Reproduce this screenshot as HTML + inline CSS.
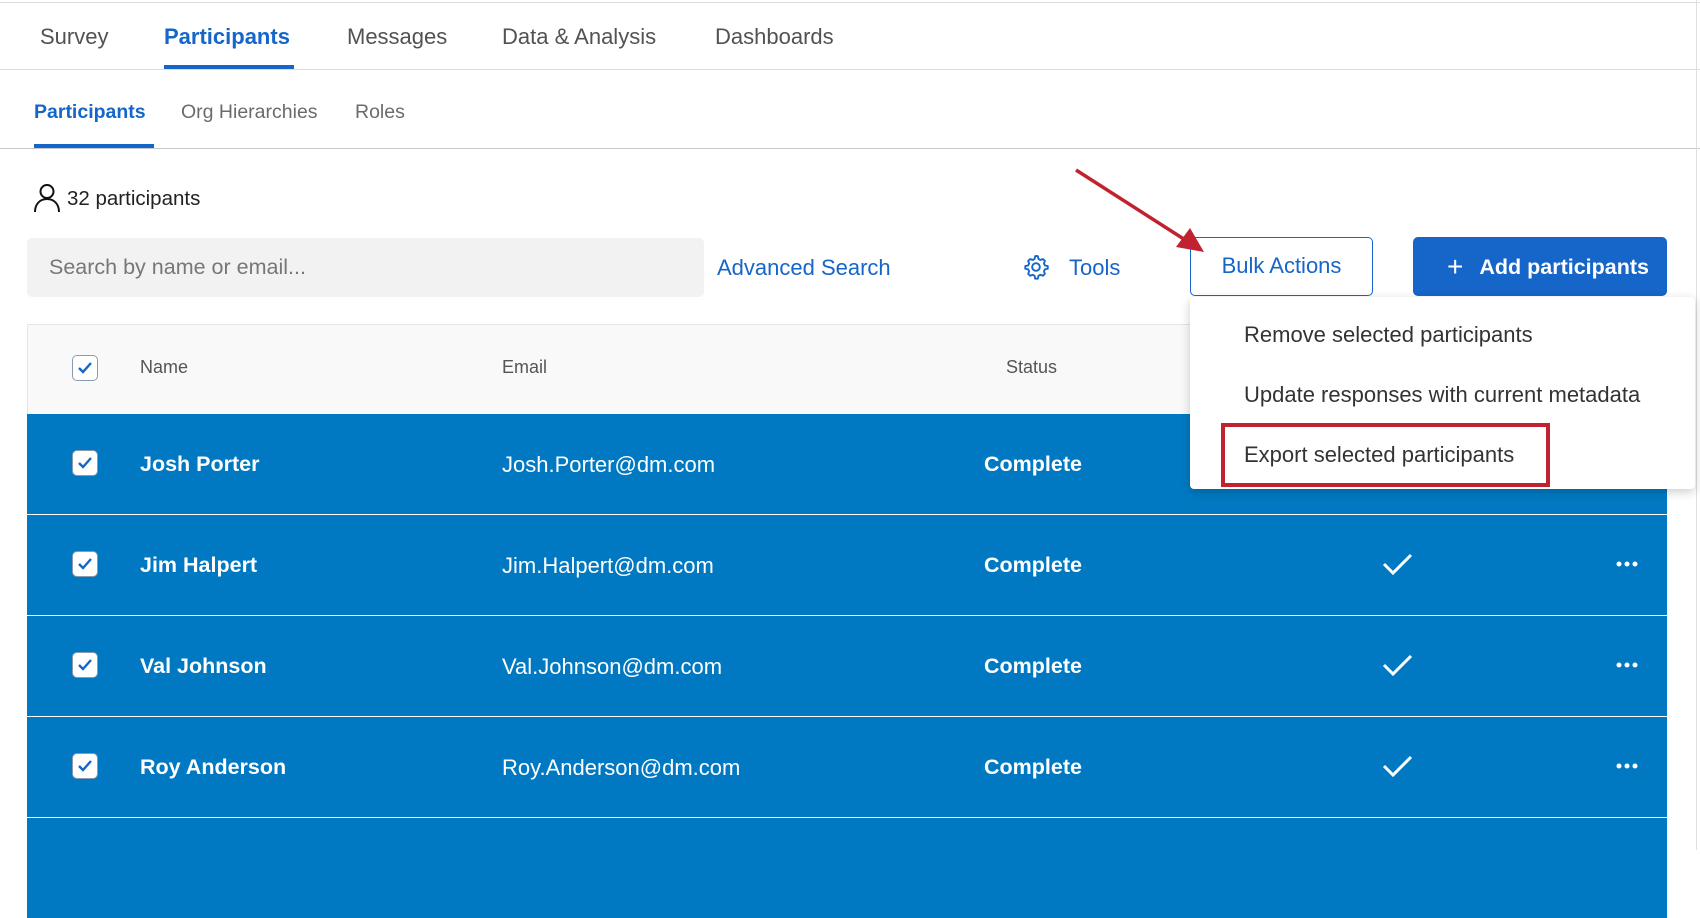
<!DOCTYPE html>
<html><head><style>
*{margin:0;padding:0;box-sizing:border-box}
body{width:1700px;height:850px;overflow:hidden;background:#fff;font-family:"Liberation Sans",sans-serif;position:relative}
.a{position:absolute;white-space:nowrap}
.tab{font-size:22px;color:#525252;top:24px}
.sub{font-size:19.5px;color:#6b6b6b;top:101px}
.row{position:absolute;left:27px;width:1640px;height:100px;background:#0079c2;color:#fff;font-size:21.5px;font-weight:bold}
.row span{position:absolute;top:38px}
.cb{position:absolute;width:26px;height:26px;border-radius:5px;background:#fff;border:1.5px solid #8a9bb0}
.cb svg{position:absolute;left:4px;top:5px}
.dd{font-size:22px;color:#333;left:1244px}
</style></head><body>
<div class="a" style="left:0;top:2px;width:1700px;height:1px;background:#ddd"></div>
<div class="a tab" style="left:40px">Survey</div>
<div class="a tab" style="left:164px;color:#1566c8;font-weight:bold">Participants</div>
<div class="a tab" style="left:347px">Messages</div>
<div class="a tab" style="left:502px">Data &amp; Analysis</div>
<div class="a tab" style="left:715px">Dashboards</div>
<div class="a" style="left:164px;top:65px;width:130px;height:4px;background:#1566c8"></div>
<div class="a" style="left:0;top:69px;width:1700px;height:1px;background:#ddd"></div>
<div class="a sub" style="left:34px;color:#1566c8;font-weight:bold">Participants</div>
<div class="a sub" style="left:181px">Org Hierarchies</div>
<div class="a sub" style="left:355px">Roles</div>
<div class="a" style="left:34px;top:144px;width:120px;height:4px;background:#1566c8"></div>
<div class="a" style="left:0;top:148px;width:1700px;height:1px;background:#c8c8c8"></div>
<svg class="a" style="left:33px;top:183px" width="28" height="30" viewBox="0 0 28 30"><circle cx="14" cy="8.5" r="6.5" fill="none" stroke="#111" stroke-width="2"/><path d="M2 29c0-8 5-13 12-13s12 5 12 13" fill="none" stroke="#111" stroke-width="2"/></svg>
<div class="a" style="left:67px;top:187px;font-size:20.5px;color:#222">32 participants</div>
<div class="a" style="left:27px;top:238px;width:677px;height:59px;background:#f2f2f2;border-radius:5px"></div>
<div class="a" style="left:49px;top:255px;font-size:21.5px;color:#777">Search by name or email...</div>
<div class="a" style="left:717px;top:255px;font-size:22px;color:#1566c8">Advanced Search</div>
<svg class="a" style="left:1022px;top:253px" width="28" height="28" viewBox="0 0 24 24"><path d="M12 2.5l1.6.2.5 2.4 1.6.9 2.3-.8 1.6 1.6-.8 2.3.9 1.6 2.4.5v2.3l-2.4.5-.9 1.6.8 2.3-1.6 1.6-2.3-.8-1.6.9-.5 2.4h-2.3l-.5-2.4-1.6-.9-2.3.8-1.6-1.6.8-2.3-.9-1.6-2.4-.5v-2.3l2.4-.5.9-1.6-.8-2.3 1.6-1.6 2.3.8 1.6-.9.5-2.4z" fill="none" stroke="#1566c8" stroke-width="1.6" stroke-linejoin="round"/><circle cx="12" cy="12" r="3.3" fill="none" stroke="#1566c8" stroke-width="1.6"/></svg>
<div class="a" style="left:1069px;top:255px;font-size:22px;color:#1566c8">Tools</div>
<div class="a" style="left:1190px;top:237px;width:183px;height:59px;border:1.5px solid #1566c8;border-radius:5px;color:#1566c8;font-size:22px;text-align:center;line-height:56px">Bulk Actions</div>
<div class="a" style="left:1413px;top:237px;width:254px;height:59px;background:#1566c8;border-radius:5px;color:#fff;font-size:21.5px;font-weight:bold;line-height:59px;padding-left:34px"><span style="font-weight:normal;font-size:28px;vertical-align:-2px;margin-right:16px">+</span>Add participants</div>
<svg class="a" style="left:0;top:0" width="1700" height="300"><line x1="1076" y1="170" x2="1190" y2="243" stroke="#c0232f" stroke-width="3.5"/><polygon points="1204,252 1176,247 1190,228" fill="#c0232f"/></svg>
<div class="a" style="left:27px;top:324px;width:1640px;height:90px;background:#f9f9f9;border-top:1px solid #e5e5e5;border-left:1px solid #e5e5e5"></div>
<div class="cb" style="left:72px;top:355px"><svg width="16" height="14" viewBox="0 0 16 14"><path d="M2 7l4 4 8-9" fill="none" stroke="#1566c8" stroke-width="2.4"/></svg></div>
<div class="a" style="left:140px;top:357px;font-size:18px;color:#555">Name</div>
<div class="a" style="left:502px;top:357px;font-size:18px;color:#555">Email</div>
<div class="a" style="left:1006px;top:357px;font-size:18px;color:#555">Status</div>
<div class="row" style="top:414px"><div class="cb" style="left:45px;top:36px"><svg width="16" height="14" viewBox="0 0 16 14"><path d="M2 7l4 4 8-9" fill="none" stroke="#1566c8" stroke-width="2.4"/></svg></div><span style="left:113px">Josh Porter</span><span style="left:475px;font-weight:normal;font-size:22px">Josh.Porter@dm.com</span><span style="left:957px">Complete</span></div>
<div class="row" style="top:515px"><div class="cb" style="left:45px;top:36px"><svg width="16" height="14" viewBox="0 0 16 14"><path d="M2 7l4 4 8-9" fill="none" stroke="#1566c8" stroke-width="2.4"/></svg></div><span style="left:113px">Jim Halpert</span><span style="left:475px;font-weight:normal;font-size:22px">Jim.Halpert@dm.com</span><span style="left:957px">Complete</span></div>
<div class="row" style="top:616px"><div class="cb" style="left:45px;top:36px"><svg width="16" height="14" viewBox="0 0 16 14"><path d="M2 7l4 4 8-9" fill="none" stroke="#1566c8" stroke-width="2.4"/></svg></div><span style="left:113px">Val Johnson</span><span style="left:475px;font-weight:normal;font-size:22px">Val.Johnson@dm.com</span><span style="left:957px">Complete</span></div>
<div class="row" style="top:717px"><div class="cb" style="left:45px;top:36px"><svg width="16" height="14" viewBox="0 0 16 14"><path d="M2 7l4 4 8-9" fill="none" stroke="#1566c8" stroke-width="2.4"/></svg></div><span style="left:113px">Roy Anderson</span><span style="left:475px;font-weight:normal;font-size:22px">Roy.Anderson@dm.com</span><span style="left:957px">Complete</span></div>
<div class="row" style="top:818px"></div>
<svg class="a" style="left:0;top:500px" width="1700" height="350">
<g fill="none" stroke="#fff" stroke-width="3"><path d="M1384 64l9 9 18-18"/><path d="M1384 165l9 9 18-18"/><path d="M1384 266l9 9 18-18"/></g>
<g fill="#fff"><circle cx="1619" cy="64" r="2.5"/><circle cx="1627" cy="64" r="2.5"/><circle cx="1635" cy="64" r="2.5"/><circle cx="1619" cy="165" r="2.5"/><circle cx="1627" cy="165" r="2.5"/><circle cx="1635" cy="165" r="2.5"/><circle cx="1619" cy="266" r="2.5"/><circle cx="1627" cy="266" r="2.5"/><circle cx="1635" cy="266" r="2.5"/></g>
</svg>
<div class="a" style="left:1696px;top:0;width:1px;height:850px;background:#e0e0e0"></div>
<div class="a" style="left:1190px;top:297px;width:505px;height:192px;background:#fff;border-radius:4px;box-shadow:0 3px 10px rgba(0,0,0,.2)"></div>
<div class="a dd" style="top:322px">Remove selected participants</div>
<div class="a dd" style="top:382px">Update responses with current metadata</div>
<div class="a dd" style="top:442px">Export selected participants</div>
<div class="a" style="left:1221px;top:423px;width:329px;height:64px;border:4px solid #c0232f"></div>
</body></html>
